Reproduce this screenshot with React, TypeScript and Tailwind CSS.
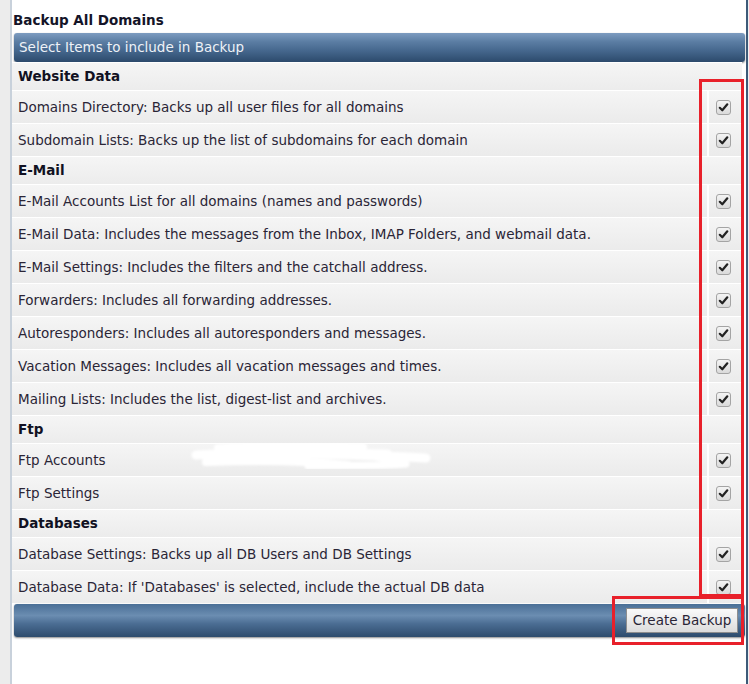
import React from 'react';

type Row = { kind: 'head'; label: string } | { kind: 'item'; label: string };

const rows: Row[] = [
  { kind: 'head', label: 'Website Data' },
  { kind: 'item', label: 'Domains Directory: Backs up all user files for all domains' },
  { kind: 'item', label: 'Subdomain Lists: Backs up the list of subdomains for each domain' },
  { kind: 'head', label: 'E-Mail' },
  { kind: 'item', label: 'E-Mail Accounts List for all domains (names and passwords)' },
  { kind: 'item', label: 'E-Mail Data: Includes the messages from the Inbox, IMAP Folders, and webmail data.' },
  { kind: 'item', label: 'E-Mail Settings: Includes the filters and the catchall address.' },
  { kind: 'item', label: 'Forwarders: Includes all forwarding addresses.' },
  { kind: 'item', label: 'Autoresponders: Includes all autoresponders and messages.' },
  { kind: 'item', label: 'Vacation Messages: Includes all vacation messages and times.' },
  { kind: 'item', label: 'Mailing Lists: Includes the list, digest-list and archives.' },
  { kind: 'head', label: 'Ftp' },
  { kind: 'item', label: 'Ftp Accounts' },
  { kind: 'item', label: 'Ftp Settings' },
  { kind: 'head', label: 'Databases' },
  { kind: 'item', label: 'Database Settings: Backs up all DB Users and DB Settings' },
  { kind: 'item', label: "Database Data: If 'Databases' is selected, include the actual DB data" },
];

function CheckBox() {
  return (
    <div className="w-[15px] h-[15px] rounded-[3px] border border-[#a4a4a4] bg-gradient-to-b from-[#f4f4f4] to-[#dadada] flex items-center justify-center">
      <svg width="11" height="11" viewBox="0 0 11 11">
        <path d="M1.8 5.8 L4.3 8.3 L9.3 2.3" fill="none" stroke="#222" strokeWidth="2.2" strokeLinecap="round" strokeLinejoin="round" />
      </svg>
    </div>
  );
}

export default function App() {
  return (
    <div className="relative w-[749px] h-[684px] flex bg-[#f0f0f0] font-['DejaVu_Sans','Verdana',sans-serif] text-[13.5px] overflow-hidden">
      <div className="w-[10px] bg-[#ececec]" />
      <div className="w-[2px] bg-[#c8d1db]" />
      <div className="w-[734px] bg-white flex flex-col">
        <div className="pt-[12px] pl-[1px] h-[33px] font-bold leading-[16px] text-[#141428]">Backup All Domains</div>

        <div className="ml-[2px] mr-[1px] h-[29px] rounded-[3px] flex items-center pl-[5px] text-[#eef2f7] shadow-[0_1px_2px_rgba(0,0,0,0.45)] bg-[linear-gradient(to_bottom,#7d9cc0_0%,#5b7da3_30%,#46688e_60%,#2c4a6c_100%)]">
          Select Items to include in Backup
        </div>

        <div className="mr-[4px] flex flex-col">
          {rows.map((r, i) =>
            r.kind === 'head' ? (
              <div
                key={i}
                className="h-[28px] border-t border-white flex items-center pl-[6px] font-bold text-[#111122] bg-gradient-to-b from-[#f5f5f5] to-[#ececec]"
              >
                {r.label}
              </div>
            ) : (
              <div key={i} className="h-[33px] border-t border-white flex bg-gradient-to-b from-[#f5f5f5] to-[#ebebeb]">
                <div className="flex-1 flex items-center pl-[6px] text-[#2a2536] whitespace-nowrap">{r.label}</div>
                <div className="w-[35px] border-l-2 border-white flex items-center pl-[7px]">
                  <CheckBox />
                </div>
              </div>
            )
          )}
        </div>

        <div className="mt-[1px] ml-[2px] mr-[1px] h-[33px] rounded-[3px] flex items-center justify-end pr-[7px] shadow-[0_1px_2px_rgba(0,0,0,0.45)] bg-[linear-gradient(to_bottom,#4a6f96_0%,#6b8db1_35%,#4b6d93_60%,#2d4b6c_100%)]">
          <button className="w-[112px] h-[25px] border border-[#8e8e8e] bg-gradient-to-b from-[#fafafa] to-[#dcdcdc] text-[#2a2536] text-[13.5px] leading-none">
            Create Backup
          </button>
        </div>
      </div>
      <div className="w-[2px] bg-[#3d5a78]" />
      <div className="flex-1 bg-[#eef0f2]" />

      {/* redaction scribble over the Ftp Accounts row */}
      <svg className="absolute left-[188px] top-[440px]" width="250" height="34" viewBox="0 0 250 34">
        <defs>
          <filter id="soft">
            <feGaussianBlur stdDeviation="1" />
          </filter>
        </defs>
        <g filter="url(#soft)" fill="none" stroke="#ffffff" strokeLinecap="round">
          <path d="M30 8 C80 4 130 6 175 7" strokeWidth="8" />
          <path d="M8 15 C70 12 150 14 238 18" strokeWidth="9" />
          <path d="M18 22 C80 20 130 22 160 25" strokeWidth="8" />
          <path d="M120 26 C160 25 200 26 218 24" strokeWidth="7" />
          <path d="M140 10 C170 12 190 16 205 22" strokeWidth="7" />
          <path d="M60 11 C100 10 140 12 200 13" strokeWidth="7" />
        </g>
      </svg>

      {/* annotation boxes */}
      <div className="absolute left-[699px] top-[79px] w-[45px] h-[518px] border-[3px] border-[#e8202a]" />
      <div className="absolute left-[612px] top-[596px] w-[132px] h-[49px] border-[3px] border-[#e8202a]" />
    </div>
  );
}
